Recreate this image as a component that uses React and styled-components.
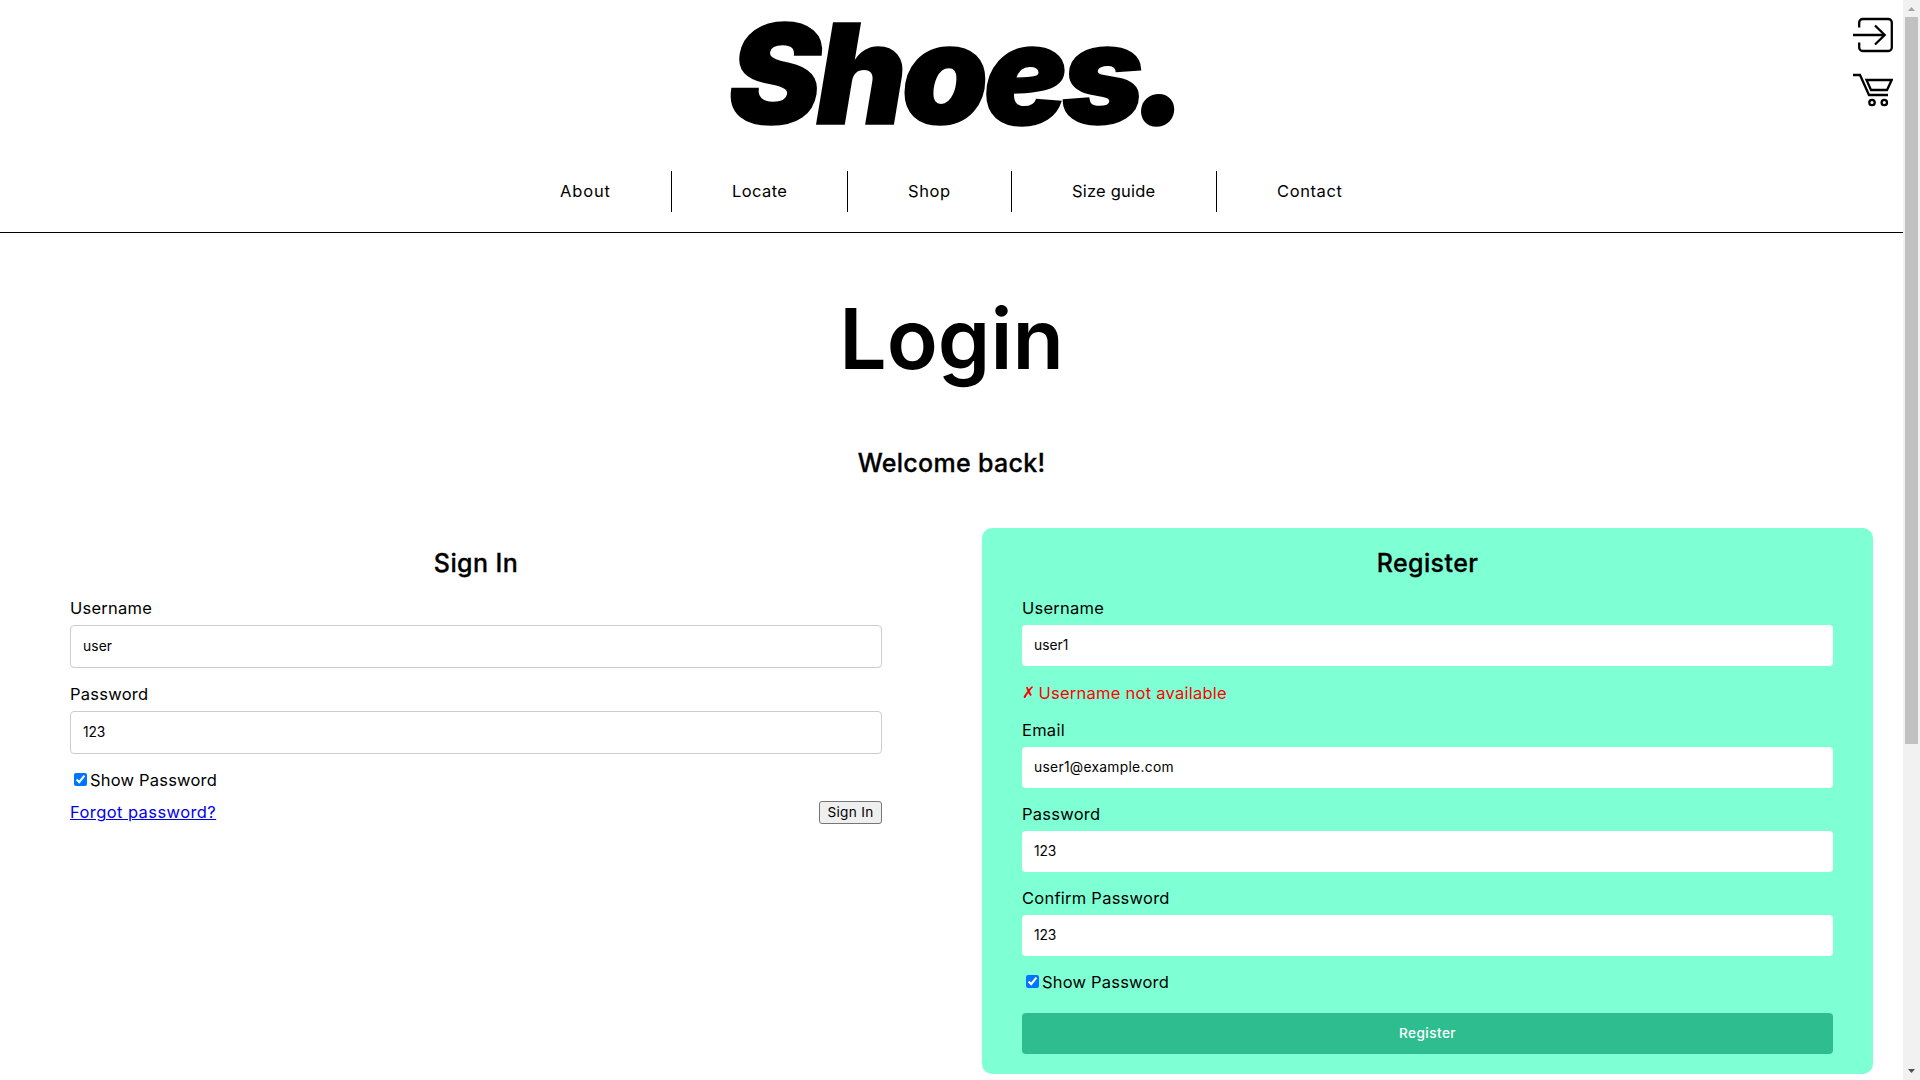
import React from "react";
import styled, { createGlobalStyle } from "styled-components";

const Global = createGlobalStyle`
  * { box-sizing: border-box; }
  html, body { margin: 0; overflow: hidden; }
  body, input, button { font-family: Inter, "Liberation Sans", sans-serif; font-weight: 400; }
  body { background: #fff; color: #000; font-size: 16.5px; }
`;

const Shell = styled.div`
  display: grid;
  grid-template-columns: 1903px 17px;
  width: 1920px;
  height: 1080px;
  overflow: hidden;
`;

const Page = styled.div`
  height: 1080px;
`;

const Header = styled.header`
  height: 233px;
  border-bottom: 1px solid #000;
`;

const Masthead = styled.div`
  display: grid;
  grid-template-columns: 1fr auto 1fr;
  height: 171px;
`;

const Logo = styled.div`
  grid-column: 2;
  width: 446px;
  font-size: 139px;
  font-weight: 900;
  font-style: italic;
  line-height: 148px;
  letter-spacing: -4.9px;
  white-space: nowrap;
  -webkit-text-stroke: 1.5px #000;
`;

const LogoDot = styled.span`
  margin-left: -6px;
  font-size: 158px;
  line-height: 1px;
`;

const Tools = styled.div`
  display: flex;
  flex-direction: column;
  align-items: flex-end;
  gap: 14px;
  padding: 15px 10px 0 0;

  svg {
    display: block;
    width: 40px;
    height: 40px;
    fill: none;
    stroke: #000;
    stroke-width: 2.3;
  }
`;

const Nav = styled.nav`
  display: flex;
  justify-content: center;
  height: 41px;
`;

const NavLink = styled.a`
  width: ${(p) => p.$width}px;
  border-right: ${(p) => (p.$last ? 0 : 1)}px solid #000;
  padding-left: 60px;
  line-height: 41px;
  letter-spacing: ${(p) => p.$spacing}px;
  white-space: nowrap;
`;

const Title = styled.h1`
  margin: 0;
  padding-top: 56px;
  height: 195px;
  text-align: center;
  font-size: 84px;
  font-weight: 600;
  line-height: 100px;
`;

const Welcome = styled.h2`
  margin: 0;
  height: 100px;
  padding-top: 20px;
  text-align: center;
  font-size: 25px;
  font-weight: 500;
  line-height: 30px;
  letter-spacing: 0.3px;
  -webkit-text-stroke: 0.3px #000;
`;

const Columns = styled.main`
  display: grid;
  grid-template-columns: 892px 891px;
  gap: 60px;
  width: 1843px;
  margin-left: 30px;
`;

const Panel = styled.form`
  height: 546px;
  padding: 20px 40px;
  border-radius: 10px;
  background: ${(p) => (p.$accent ? "#7fffd4" : "transparent")};
`;

const PanelTitle = styled.h2`
  margin: 0 0 18px;
  height: 31px;
  text-align: center;
  font-size: 25px;
  font-weight: 500;
  line-height: 30px;
  letter-spacing: 0.4px;
  -webkit-text-stroke: 0.3px #000;
`;

const Field = styled.div`
  height: ${(p) => p.$height}px;
`;

const Label = styled.label`
  display: block;
  height: 28px;
  line-height: 22px;
  letter-spacing: 0.25px;
`;

const Input = styled.input`
  display: block;
  width: 100%;
  height: ${(p) => (p.$bordered ? 43 : 41)}px;
  padding: ${(p) => (p.$bordered ? "0 12px 1px" : "0 12px 2px")};
  border: ${(p) => (p.$bordered ? "1px solid #ccc" : "0")};
  border-radius: 4px;
  outline: 0;
  background: #fff;
  color: #000;
  font-size: 13.8px;
  letter-spacing: ${(p) => p.$spacing || 0}px;
`;

const ErrorText = styled.div`
  display: flex;
  height: 38px;
  line-height: 24px;
  color: #f00;
  letter-spacing: 0.25px;
`;

const Cross = styled.span`
  width: 16.5px;
  font-family: "DejaVu Sans", sans-serif;
  font-size: 16px;
  letter-spacing: 0;
`;

const Check = styled.label`
  display: flex;
  align-items: flex-start;
  height: ${(p) => p.$height}px;
  line-height: 24px;
  letter-spacing: 0.2px;

  input {
    width: 13px;
    height: 13px;
    margin: 5px 3px 0 4px;
  }
`;

const Actions = styled.div`
  display: flex;
  justify-content: space-between;
  height: 23px;
`;

const Forgot = styled.a`
  color: #0000ee;
  line-height: 22px;
  text-decoration: underline;
  letter-spacing: 0.42px;
`;

const SignInButton = styled.button`
  width: 63px;
  height: 23px;
  padding: 0 0 1px;
  border: 1px solid #767676;
  border-radius: 3px;
  background: #efefef;
  color: #000;
  font-size: 13.6px;
  letter-spacing: 0.3px;
`;

const RegisterButton = styled.button`
  display: block;
  width: 100%;
  height: 41px;
  padding-bottom: 2px;
  border: 0;
  border-radius: 4px;
  background: #2ebd8e;
  color: #fff;
  font-size: 13.6px;
  font-weight: 500;
  letter-spacing: 0.45px;
`;

const Scrollbar = styled.div`
  display: flex;
  flex-direction: column;
  align-items: center;
  justify-content: space-between;
  background: #f1f1f1;

  svg { display: block; width: 17px; height: 17px; flex: none; }
`;

const Track = styled.div`
  flex: 1;
  width: 13px;
`;

const Thumb = styled.div`
  height: 727px;
  background: #c1c1c1;
`;

const NAV = [
  ["About", 172, 0.85],
  ["Locate", 176, 0.4],
  ["Shop", 164, 0.6],
  ["Size guide", 205, 0.2],
  ["Contact", 186, 0.6],
];

export default function App() {
  return (
    <Shell>
      <Global />
      <Page>
        <Header>
          <Masthead>
            <Logo>Shoes<LogoDot>.</LogoDot></Logo>
            <Tools>
              <svg viewBox="0 0 40 40">
                <path d="M6.2 12.5V7.5a3.5 3.5 0 0 1 3.5-3.5h25.6a3.5 3.5 0 0 1 3.5 3.5v25a3.5 3.5 0 0 1-3.5 3.5H9.7a3.5 3.5 0 0 1-3.5-3.5v-5M0 20h32M22 10.5l9.7 9.5-9.7 9.5" />
              </svg>
              <svg viewBox="0 0 40 40">
                <path d="M0 6h7l9 20h19M13.5 11h25.2l-4.7 10H18z" />
                <circle cx="19" cy="33.5" r="2.7" />
                <circle cx="31.3" cy="33.5" r="2.7" />
              </svg>
            </Tools>
          </Masthead>
          <Nav>
            {NAV.map(([name, width, spacing], i) => (
              <NavLink key={name} $width={width} $spacing={spacing} $last={i === NAV.length - 1}>
                {name}
              </NavLink>
            ))}
          </Nav>
        </Header>
        <Title>Login</Title>
        <Welcome>Welcome back!</Welcome>
        <Columns>
          <Panel>
            <PanelTitle>Sign In</PanelTitle>
            <Field $height={86}>
              <Label>Username</Label>
              <Input $bordered $spacing={0.1} defaultValue="user" />
            </Field>
            <Field $height={85}>
              <Label>Password</Label>
              <Input $bordered $spacing={-0.2} defaultValue="123" />
            </Field>
            <Check $height={33}>
              <input type="checkbox" defaultChecked />
              Show Password
            </Check>
            <Actions>
              <Forgot>Forgot password?</Forgot>
              <SignInButton type="button">Sign In</SignInButton>
            </Actions>
          </Panel>
          <Panel $accent>
            <PanelTitle>Register</PanelTitle>
            <Field $height={84}>
              <Label>Username</Label>
              <Input defaultValue="user1" />
            </Field>
            <ErrorText><Cross>✗</Cross>Username not available</ErrorText>
            <Field $height={84}>
              <Label>Email</Label>
              <Input $spacing={0.3} defaultValue="user1@example.com" />
            </Field>
            <Field $height={84}>
              <Label>Password</Label>
              <Input $spacing={-0.2} defaultValue="123" />
            </Field>
            <Field $height={83}>
              <Label>Confirm Password</Label>
              <Input $spacing={-0.2} defaultValue="123" />
            </Field>
            <Check $height={43}>
              <input type="checkbox" defaultChecked />
              Show Password
            </Check>
            <RegisterButton type="button">Register</RegisterButton>
          </Panel>
        </Columns>
      </Page>
      <Scrollbar>
        <svg viewBox="0 0 17 17"><path d="M5 11h7L8.5 7z" fill="#a3a3a3" /></svg>
        <Track><Thumb /></Track>
        <svg viewBox="0 0 17 17"><path d="M5 6h7L8.5 10z" fill="#505050" /></svg>
      </Scrollbar>
    </Shell>
  );
}
